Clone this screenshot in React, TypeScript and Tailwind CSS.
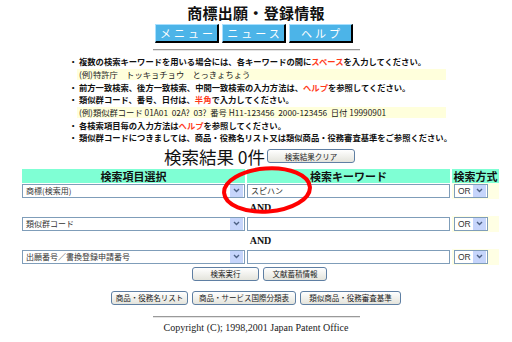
import React from 'react';

const JP = "font-['Noto_Sans_CJK_JP',sans-serif]";

type Part = { t: string; red?: boolean };

const NOTES: { example?: boolean; parts: Part[] }[] = [
  { parts: [{ t: '複数の検索キーワードを用いる場合には、各キーワードの間に' }, { t: 'スペース', red: true }, { t: 'を入力してください。' }] },
  { example: true, parts: [{ t: '(例)特許庁\u3000トッキョチョウ\u3000とっきょちょう' }] },
  { parts: [{ t: '前方一致検索、後方一致検索、中間一致検索の入力方法は、' }, { t: 'ヘルプ', red: true }, { t: 'を参照してください。' }] },
  { parts: [{ t: '類似群コード、番号、日付は、' }, { t: '半角', red: true }, { t: 'で入力してください。' }] },
  { example: true, parts: [{ t: '(例)類似群コード 01A01\u00a0\u00a002A?\u00a0\u00a003?\u00a0\u00a0番号 H11-123456\u00a0\u00a02000-123456\u00a0\u00a0日付 19990901' }] },
  { parts: [{ t: '各検索項目毎の入力方法は' }, { t: 'ヘルプ', red: true }, { t: 'を参照してください。' }] },
  { parts: [{ t: '類似群コードにつきましては、商品・役務名リスト又は類似商品・役務審査基準をご参照ください。' }] },
];

function BlueButton({ label }: { label: string }) {
  return (
    <button className={`w-[64px] h-[19px] pl-[3px] bg-[#4cb4e8] text-white text-[11px] leading-none tracking-[3px] border-t border-l border-t-[#a8e0ff] border-l-[#a8e0ff] border-r-2 border-b-2 border-r-black border-b-black ${JP}`}>
      {label}
    </button>
  );
}

function GrayButton({ label, className }: { label: string; className: string }) {
  return (
    <button className={`h-[14px] rounded-[3px] border border-[#5f7fa3] bg-gradient-to-b from-white to-[#e4e4dc] text-[7.5px] leading-none text-[#222] whitespace-nowrap ${JP} ${className}`}>
      {label}
    </button>
  );
}

function Chevron() {
  return (
    <svg width="7" height="5" viewBox="0 0 7 5">
      <path d="M1 1 L3.5 3.5 L6 1" fill="none" stroke="#4d6185" strokeWidth="1.4" />
    </svg>
  );
}

function SelectBox({ value }: { value: string }) {
  return (
    <div className="flex items-center h-[14px] w-full border border-[#7f9db9] bg-white">
      <span className={`flex-1 pl-[3px] text-[8px] leading-none text-[#333] whitespace-nowrap ${JP}`}>{value}</span>
      <span className="w-[13px] h-[12px] mr-px bg-[#c6d5fb] flex items-center justify-center">
        <Chevron />
      </span>
    </div>
  );
}

function SearchRow({ item, keyword }: { item: string; keyword?: string }) {
  return (
    <>
      <div className="h-[16px] flex items-center">
        <SelectBox value={item} />
      </div>
      <div className="h-[16px] flex items-center">
        <div className={`h-[14px] w-full border border-[#7f9db9] bg-white pl-[3px] text-[8px] leading-[12px] text-[#333] ${JP}`}>{keyword}</div>
      </div>
      <div className="h-[16px] flex items-center pl-[2px] bg-[#ffffe4]">
        <div className="w-[34px]">
          <div className="flex items-center h-[14px] w-full border border-[#7f9db9] bg-white">
            <span className="flex-1 pl-[3px] text-[8.5px] leading-none text-[#333] font-['Liberation_Sans',sans-serif]">OR</span>
            <span className="w-[13px] h-[12px] mr-px bg-[#c6d5fb] flex items-center justify-center">
              <Chevron />
            </span>
          </div>
        </div>
      </div>
    </>
  );
}

function AndRow() {
  return (
    <div className="col-span-3 h-[17px] flex items-center justify-center text-[10px] font-bold text-[#111] font-['Liberation_Serif',serif]">
      AND
    </div>
  );
}

export default function App() {
  return (
    <div className="relative w-[512px] h-[342px] overflow-hidden bg-white">
      <h1 className={`pt-[4px] h-[21px] text-center text-[15px] leading-[17px] font-bold text-[#111] tracking-[0.3px] ${JP}`}>
        商標出願・登録情報
      </h1>
      <div className="mt-[3px] flex justify-center gap-[3px] pr-[4px]">
        <BlueButton label="メニュー" />
        <BlueButton label="ニュース" />
        <BlueButton label="ヘルプ" />
      </div>
      <div className="mx-auto mt-[6px] w-[207px] border-t border-t-[#9a9a9a] border-b border-b-[#e4e4e4]" />

      <div className={`mt-[4px] pl-[69px] text-[8.3px] font-bold text-[#111] ${JP}`}>
        {NOTES.map((n, i) => (
          <div key={i} className="h-[12.7px] flex items-center">
            {n.example ? (
              <div className="ml-[8px] w-[369px] h-[11px] flex items-center bg-[#ffffdc] font-normal pl-[2px] text-[#222]">
                {n.parts.map((p, j) => <span key={j}>{p.t}</span>)}
              </div>
            ) : (
              <>
                <span className="w-[10px] inline-block">・</span>
                {n.parts.map((p, j) => (
                  <span key={j} className={p.red ? 'text-[#ff3a1a]' : ''}>{p.t}</span>
                ))}
              </>
            )}
          </div>
        ))}
      </div>

      <div className="ml-[22px] w-[475px]">
        <div className="mt-[3px] h-[19px] flex items-center justify-center gap-[2px]">
          <span className={`text-[17.5px] leading-none text-[#111] ${JP}`}>検索結果 0件</span>
          <GrayButton label="検索結果クリア" className="w-[88px]" />
        </div>

        <div className="mt-[3px] grid grid-cols-[223px_203px_47px] gap-x-[2px]">
          <div className={`h-[14px] bg-[#7fffd4] text-center text-[11px] leading-[14px] font-bold text-[#111] ${JP}`}>検索項目選択</div>
          <div className={`h-[14px] bg-[#7fffd4] text-center text-[11px] leading-[14px] font-bold text-[#111] ${JP}`}>検索キーワード</div>
          <div className={`h-[14px] bg-[#7fffd4] text-center text-[11px] leading-[14px] font-bold text-[#111] ${JP}`}>検索方式</div>
          <SearchRow item="商標(検索用)" keyword="スピハン" />
          <AndRow />
          <SearchRow item="類似群コード" />
          <AndRow />
          <SearchRow item="出願番号／書換登録申請番号" />
        </div>

        <div className="mt-[2px] flex justify-center gap-[4px]">
          <GrayButton label="検索実行" className="w-[67px]" />
          <GrayButton label="文献蓄積情報" className="w-[64px]" />
        </div>
      </div>

      <div className="mt-[10px] flex justify-center gap-[4px]">
        <GrayButton label="商品・役務名リスト" className="w-[77px]" />
        <GrayButton label="商品・サービス国際分類表" className="w-[104px]" />
        <GrayButton label="類似商品・役務審査基準" className="w-[101px]" />
      </div>

      <div className="mx-auto mt-[11px] w-[207px] border-t border-t-[#9a9a9a] border-b border-b-[#e4e4e4]" />
      <p className="mt-[4px] text-center text-[10px] leading-[12px] text-[#222] font-['Liberation_Serif',serif]">
        Copyright (C); 1998,2001 Japan Patent Office
      </p>

      <svg className="absolute left-[219px] top-[164px]" width="96" height="54" viewBox="0 0 96 54">
        <ellipse cx="48" cy="26" rx="43" ry="21.5" transform="rotate(-4 48 26)" fill="none" stroke="#ff0000" strokeWidth="4" />
      </svg>
    </div>
  );
}
